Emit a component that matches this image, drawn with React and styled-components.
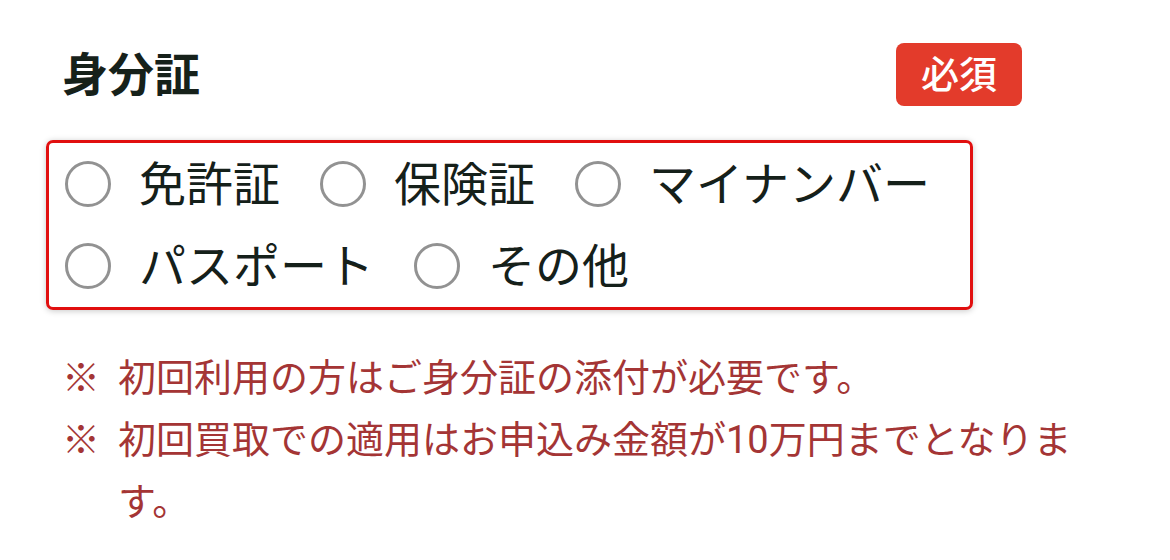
import React from "react";
import styled, { createGlobalStyle } from "styled-components";

const GlobalStyle = createGlobalStyle`
  html, body {
    margin: 0;
    padding: 0;
    background: #ffffff;
  }
  body {
    font-family: Roboto, "Noto Sans CJK JP", sans-serif;
  }
`;

const Page = styled.section`
  padding: 43px 0 0 62px;
  width: 1033px;
`;

const Header = styled.header`
  display: flex;
  justify-content: space-between;
  align-items: center;
  width: 960px;
  height: 63px;
`;

const Title = styled.h2`
  margin: 0;
  font-size: 46px;
  font-weight: 700;
  line-height: 1;
  color: #16211a;
`;

const Badge = styled.span`
  display: flex;
  align-items: center;
  justify-content: center;
  width: 126px;
  height: 63px;
  box-sizing: border-box;
  border-radius: 8px;
  background: #e33b2b;
  color: #ffffff;
  font-size: 38px;
  font-weight: 500;
  line-height: 1;
`;

const Options = styled.div`
  display: flex;
  flex-wrap: wrap;
  column-gap: 40px;
  width: 927px;
  box-sizing: border-box;
  margin: 34px 0 0 -16px;
  padding: 0 16px;
  border: 3px solid #e10f0f;
  border-radius: 7px;
  box-shadow: 0 1px 6px rgba(0, 0, 0, 0.22);
`;

const Option = styled.label`
  display: flex;
  align-items: center;
  height: 82px;
  cursor: pointer;
`;

const Circle = styled.span`
  width: 46px;
  height: 46px;
  box-sizing: border-box;
  border: 3.5px solid #929292;
  border-radius: 50%;
  margin-right: 28px;
  flex-shrink: 0;
`;

const OptionText = styled.span`
  font-size: 47px;
  line-height: 1;
  color: #15201a;
  white-space: nowrap;
`;

const Notes = styled.ul`
  list-style: none;
  margin: 37px 0 0;
  padding: 0;
`;

const Note = styled.li`
  display: flex;
  font-size: 38px;
  line-height: 62px;
  color: #a43535;
`;

const Mark = styled.span`
  flex-shrink: 0;
  width: 56px;
`;

const options = ["免許証", "保険証", "マイナンバー", "パスポート", "その他"];

const notes = [
  "初回利用の方はご身分証の添付が必要です。",
  "初回買取での適用はお申込み金額が10万円までとなります。",
];

export default function App() {
  return (
    <>
      <GlobalStyle />
      <Page>
        <Header>
          <Title>身分証</Title>
          <Badge>必須</Badge>
        </Header>
        <Options>
          {options.map((label) => (
            <Option key={label}>
              <Circle />
              <OptionText>{label}</OptionText>
            </Option>
          ))}
        </Options>
        <Notes>
          {notes.map((n) => (
            <Note key={n}>
              <Mark>※</Mark>
              <span>{n}</span>
            </Note>
          ))}
        </Notes>
      </Page>
    </>
  );
}
